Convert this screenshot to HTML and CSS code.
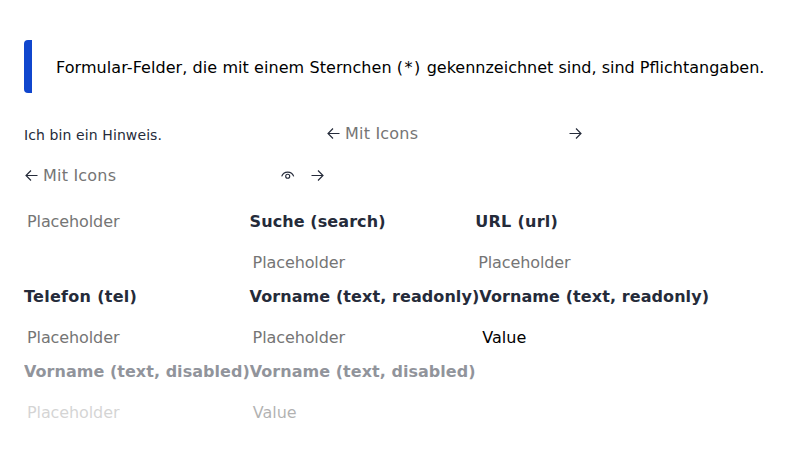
FILE: index.html
```html
<!DOCTYPE html>
<html lang="de">
<head>
<meta charset="utf-8">
<title>Formular</title>
<link rel="stylesheet" href="styles.css">
</head>
<body>
<p class="notice"><span class="lead">Formular-Felder, die mit einem Sternchen </span><span class="mark">(*)</span> gekennzeichnet sind, sind Pflichtangaben.</p>
<div class="icon-row first">
  <span class="hint">Ich bin ein Hinweis.</span>
  <div class="icon-field">
    <svg viewBox="0 0 14 14"><path d="M13.5 6.5H2M7 1.5L2 6.5L7 11.5"/></svg>
    <span class="placeholder label">Mit Icons</span>
    <svg class="end" viewBox="0 0 14 14"><path d="M.5 6.5H12M7 1.5L12 6.5L7 11.5"/></svg>
  </div>
</div>
<div class="icon-row second">
  <div class="icon-field wide">
    <svg viewBox="0 0 14 14"><path d="M13.5 6.5H2M7 1.5L2 6.5L7 11.5"/></svg>
    <span class="placeholder label">Mit Icons</span>
    <svg class="eye end" viewBox="0 0 14 14"><path d="M.7 7.4C2.5 1.7 10.9 1.7 12.7 7.4"/><circle cx="6.7" cy="7.2" r="2"/></svg>
    <svg viewBox="0 0 14 14"><path d="M.5 6.5H12M7 1.5L12 6.5L7 11.5"/></svg>
  </div>
</div>
<div class="grid">
  <div class="field"><span class="value placeholder">Placeholder</span></div>
  <div class="field"><b>Suche (search)</b><span class="value placeholder">Placeholder</span></div>
  <div class="field"><b class="short">URL (url)</b><span class="value placeholder">Placeholder</span></div>
</div>
<div class="grid flow">
  <div class="field"><b class="short">Telefon (tel)</b><span class="value placeholder">Placeholder</span></div>
  <div class="field"><b>Vorname (text, readonly)</b><span class="value placeholder">Placeholder</span></div>
  <div class="field"><b>Vorname (text, readonly)</b><span class="value">Value</span></div>
</div>
<div class="grid flow">
  <div class="field disabled"><b>Vorname (text, disabled)</b><span class="value placeholder">Placeholder</span></div>
  <div class="field disabled"><b>Vorname (text, disabled)</b><span class="value">Value</span></div>
</div>
</body>
</html>
```
FILE: styles.css
```css
* { box-sizing: border-box; }
body { margin: 0; padding: 40px 24px 0; width: 800px; height: 459px; overflow: hidden; background: #fff; color: #000; font: 16px/20px Verdana, "DejaVu Sans", sans-serif; white-space: nowrap; }
.notice { margin: 0; height: 53px; border-left: 8px solid #1046cd; border-radius: 4px 0 0 4px; padding: 18px 0 0 24px; }
.lead { letter-spacing: .07px; }
.mark { letter-spacing: 1.4px; }
.icon-row { display: flex; }
.first { margin-top: 31px; height: 42px; }
.hint { width: 302px; color: #252b3a; font-size: 14px; line-height: 22px; letter-spacing: .1px; }
.icon-field { display: flex; align-items: center; gap: 5px; width: 257px; height: 20px; }
.wide { width: 301px; }
.icon-field svg { width: 14px; height: 14px; flex: none; fill: none; stroke: #252b3a; stroke-width: 1.15; }
.icon-field .end { margin-left: auto; }
.icon-field .eye { margin-right: 11px; }
.placeholder { color: #757575; letter-spacing: -.1px; }
.label { letter-spacing: .2px; }
.second { height: 46px; }
.grid { display: flex; }
.field { display: flex; flex-direction: column; min-width: 225.6px; }
.field b { color: #252b3a; margin-bottom: 21px; letter-spacing: .085px; }
.field .short { letter-spacing: .28px; }
.value { margin-left: 3px; }
.flow { margin-top: 14px; }
.disabled b { opacity: .5; letter-spacing: .035px; }
.disabled .value { opacity: .3; }
```
